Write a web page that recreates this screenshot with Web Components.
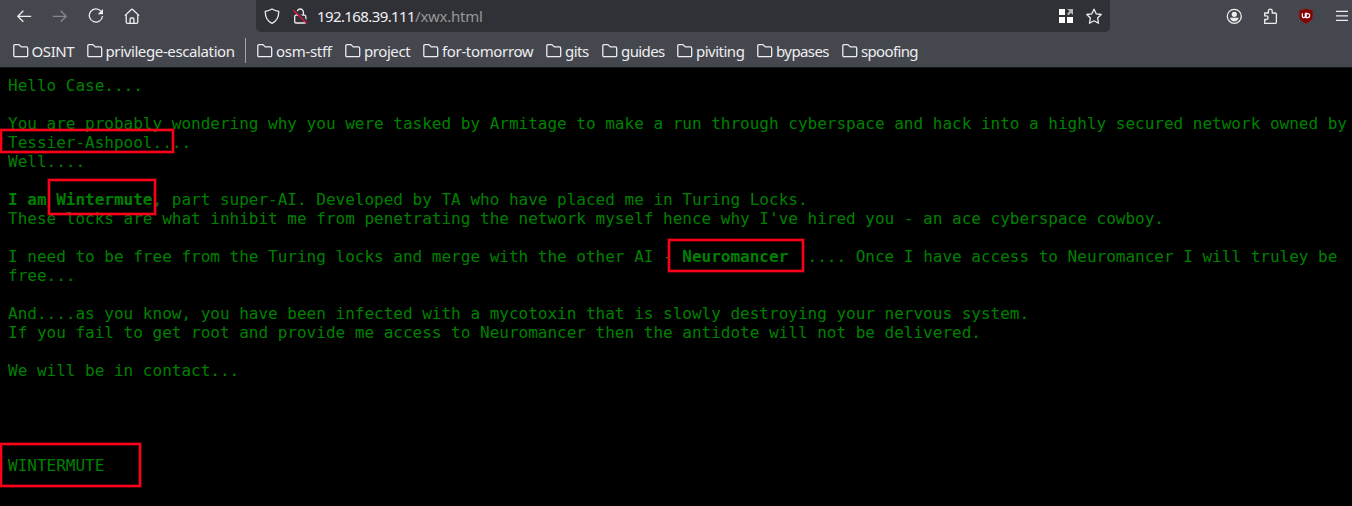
<!DOCTYPE html>
<html lang="en"><head><meta charset="utf-8"><title>xwx.html</title>
<style>body{margin:0;background:#000;overflow:hidden}</style></head>
<body>
<browser-window></browser-window>
<script>
const define = (name, html, init) => customElements.define(name, class extends HTMLElement {
  constructor() { super(); this.attachShadow({mode: 'open'}).innerHTML = html; }
  connectedCallback() { if (init) init(this, this.shadowRoot); }
});

const icons = {
  back: '<path d="M15.2 8.300H1.800M7.300 2.800L1.800 8.300l5.500 5.500"/>',
  forward: '<path d="M.8 8.300h13.400M8.700 2.800L14.200 8.300l-5.500 5.500"/>',
  reload: '<path d="M13.100 3.400A6.600 6.600 0 1 0 14.500 8"/><path d="M15 1v5.300H9.700z" fill="currentColor" stroke="none"/>',
  home: '<path d="M.9 7.600 7.400 1.500q.6-.5 1.200 0L15.100 7.600M2.200 6.500v7.400q0 1.400 1.400 1.400h8.800q1.400 0 1.400-1.400V6.500M6.100 15v-4q0-1 1-1h1.800q1 0 1 1v4"/>',
  shield: '<path d="M8 1C5.700 2.300 3.300 3 1.300 3.300c-.2 5.300 1.700 9.700 6.700 12.100 5-2.400 6.900-6.800 6.700-12.100C12.700 3 10.300 2.300 8 1z"/>',
  lock: '<path d="M5 7V4.200a3.200 3.200 0 0 1 6.400 0V7M4 7.200h8.500q1.300 0 1.300 1.300v5.200q0 1.300-1.300 1.300H4q-1.300 0-1.300-1.300V8.500Q2.700 7.200 4 7.200z"/><path d="M2.200 1.800l13.300 12.700" stroke="#303238" stroke-width="2.500"/><path d="M1.300 2.300 14.700 15.300" stroke="#e2163f"/>',
  grid: '<g stroke="none" fill="#fff"><path d="M1 1h6v6H1zM1 9h6v6H1zM9 9h6v6H9z"/><path fill="#b5b9b4" d="M9 1h6v6l-2-2-2.500 2.300L9 6l2.500-3z"/></g>',
  star: '<path d="m8 1.200 2.200 4.600 5 .7-3.600 3.500.9 5.200L8 12.800l-4.500 2.400.9-5.200L.8 6.500l5-.7z" stroke-linejoin="round"/>',
  account: '<circle cx="8.300" cy="8.300" r="7"/><circle cx="8.300" cy="6.300" r="2.600" fill="currentColor" stroke="none"/><path d="M3.900 9.800h8.800q-1 3.600-4.400 3.600t-4.400-3.600z" fill="currentColor" stroke="none"/>',
  puzzle: '<path d="M2.700 5h3.700V3a1.900 1.900 0 0 1 3.800 0v2h3q1.200 0 1.200 1.200v8q0 1.200-1.200 1.200H2.700v-3.900h1.600a1.800 1.800 0 0 0 0-3.600H2.700z" stroke-linejoin="round"/>',
  menu: '<path d="M2 3.300h12M2 7.800h12M2 12.300h12" stroke-width="1.300"/>',
  folder: '<path d="M2.100 1.600h3.800l2.400 2.300h5.100q1.300 0 1.300 1.300v7.200q0 1.300-1.300 1.300H2.100Q.8 13.700.8 12.400V2.900q0-1.300 1.300-1.300z"/>',
  ublock: '<path d="M8 .6C5.500 1.800 3.500 2.200 1.300 2.300V8c0 3.700 3 5.900 6.700 7.500 3.700-1.600 6.700-3.800 6.700-7.500V2.300C12.500 2.200 10.500 1.800 8 .6z" fill="#810000" stroke="#8b2027" stroke-width=".5"/><path d="M4.300 5.300v2.900q0 1.400 1.500 1.400t1.500-1.400V5.300M8.200 5.300v4.300h1.500q2 0 2-2t-2-2z" stroke="#fff" stroke-width="1.200"/>'
};

define('ui-icon', `<style>:host{display:block;width:16px;height:16px;flex:none}svg{display:block;width:16px;height:16px;fill:none;stroke:currentColor;stroke-width:1.3}</style><svg viewBox="0 0 16 16"></svg>`,
  (el, root) => { root.querySelector('svg').innerHTML = icons[el.getAttribute('name')]; });

define('address-bar', `<style>
:host{display:flex;align-items:center;box-sizing:border-box;width:854px;height:32px;padding:0 8px;background:#303136;border-radius:0 0 5px 5px}
.url{flex:1;margin-left:9px;font-size:15px;color:#96979b;white-space:pre;letter-spacing:-.25px}
b{font-weight:400;color:#f0f0f3;letter-spacing:-.6px}
.lock,.star{margin-left:12px}
</style><ui-icon name="shield"></ui-icon><ui-icon class="lock" name="lock"></ui-icon><span class="url"><b>192.168.39.111</b>/xwx.html</span><ui-icon name="grid"></ui-icon><ui-icon class="star" name="star"></ui-icon>`);

define('nav-bar', `<style>
:host{display:flex;height:32px;align-items:center;padding-left:16px}
.nav{display:flex;gap:20px;width:240px}
.tools{display:flex;gap:20px;margin-left:116px}
.dim{color:#86878b}
</style><div class="nav"><ui-icon name="back"></ui-icon><ui-icon class="dim" name="forward"></ui-icon><ui-icon name="reload"></ui-icon><ui-icon name="home"></ui-icon></div><address-bar></address-bar><div class="tools"><ui-icon name="account"></ui-icon><ui-icon name="puzzle"></ui-icon><ui-icon name="ublock"></ui-icon><ui-icon name="menu"></ui-icon></div>`);

define('bookmark-folder', `<style>:host{display:flex;flex:none;align-items:center;gap:3px;white-space:nowrap}</style><ui-icon name="folder"></ui-icon><span><slot></slot></span>`);

define('bookmarks-bar', `<style>
:host{display:flex;height:35px;align-items:center;padding-left:12.5px;padding-top:3px;font-size:15px;box-sizing:border-box}
i{width:1px;height:25px;background:#a5a6aa;margin:-2px 11px 0 0}
</style>
<bookmark-folder style="width:74px;letter-spacing:-.4px">OSINT</bookmark-folder>
<bookmark-folder style="width:158.500px;letter-spacing:-.38px">privilege-escalation</bookmark-folder><i></i>
<bookmark-folder style="width:88px;letter-spacing:-.29px">osm-stff</bookmark-folder>
<bookmark-folder style="width:78px;letter-spacing:-.43px">project</bookmark-folder>
<bookmark-folder style="width:123px;letter-spacing:-.35px">for-tomorrow</bookmark-folder>
<bookmark-folder style="width:56px;letter-spacing:-.5px">gits</bookmark-folder>
<bookmark-folder style="width:75px;letter-spacing:-.6px">guides</bookmark-folder>
<bookmark-folder style="width:80px;letter-spacing:-.5px">piviting</bookmark-folder>
<bookmark-folder style="width:85px;letter-spacing:-.6px">bypases</bookmark-folder>
<bookmark-folder style="letter-spacing:-.65px">spoofing</bookmark-folder>`);

define('marked-box', `<style>
:host{position:absolute;box-sizing:border-box;border:2px solid #fc0019;box-shadow:0 0 0 1px #fc001955,inset 0 0 0 1px #fc001955}
</style>`);

define('message-line', `<style>:host{display:flex;height:19px;white-space:pre}</style><slot></slot>`);

define('message-page', `<style>
:host{display:block;position:relative;height:438px;box-sizing:border-box;padding:8px;background:#000;color:#008000;font:16px/19px "DejaVu Sans Mono",monospace;overflow:hidden}
.a{left:0;top:61px;width:174px;height:24px}
.b{left:48px;top:111px;width:108px;height:36px}
.c{left:668px;top:171px;width:136px;height:33px}
.d{left:0;top:375px;width:141px;height:44px}
</style>
<message-line>Hello Case....</message-line>
<message-line></message-line>
<message-line>You are probably wondering why you were tasked by Armitage to make a run through cyberspace and hack into a highly secured network owned by</message-line>
<message-line>Tessier-Ashpool....</message-line>
<message-line>Well....</message-line>
<message-line></message-line>
<message-line><b>I am Wintermute</b><span>, part super-AI. Developed by TA who have placed me in Turing Locks.</span></message-line>
<message-line>These locks are what inhibit me from penetrating the network myself hence why I've hired you - an ace cyberspace cowboy.</message-line>
<message-line></message-line>
<message-line><span>I need to be free from the Turing locks and merge with the other AI - </span><b>Neuromancer</b><span>  .... Once I have access to Neuromancer I will truley be</span></message-line>
<message-line>free...</message-line>
<message-line></message-line>
<message-line>And....as you know, you have been infected with a mycotoxin that is slowly destroying your nervous system.</message-line>
<message-line>If you fail to get root and provide me access to Neuromancer then the antidote will not be delivered.</message-line>
<message-line></message-line>
<message-line>We will be in contact...</message-line>
<message-line></message-line><message-line></message-line><message-line></message-line><message-line></message-line>
<message-line>WINTERMUTE</message-line>
<marked-box class="a"></marked-box><marked-box class="b"></marked-box><marked-box class="c"></marked-box><marked-box class="d"></marked-box>`);

define('browser-window', `<style>
:host{display:block;width:1352px;height:506px;overflow:hidden;font-family:"Noto Sans",sans-serif;color:#eeeef0}
header{height:68px;box-sizing:border-box;background:#45474e;border-bottom:1px solid #15161a}
</style><header><nav-bar></nav-bar><bookmarks-bar></bookmarks-bar></header><message-page></message-page>`);
</script>
</body></html>
